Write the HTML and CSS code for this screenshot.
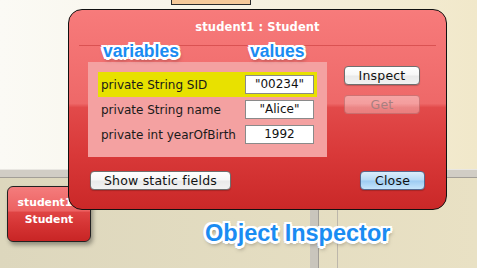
FILE: index.html
```html
<!DOCTYPE html>
<html>
<head>
<meta charset="utf-8">
<title>Object Inspector</title>
<link rel="stylesheet" href="styles.css">
</head>
<body>
<div class="screen">
  <div class="desk-top"></div>
  <div class="desk-band"></div>
  <div class="desk-bottom"></div>

  <div class="class-box"></div>

  <div class="obj">
    <span class="obj-line">student1 :</span>
    <span class="obj-line">Student</span>
  </div>

  <div class="dialog">
    <div class="title">student1 : Student</div>
    <div class="body">
      <div class="fields">
        <div class="row selected">
          <span class="name">private String SID</span>
          <span class="value">"00234"</span>
        </div>
        <div class="row">
          <span class="name">private String name</span>
          <span class="value">"Alice"</span>
        </div>
        <div class="row">
          <span class="name">private int yearOfBirth</span>
          <span class="value">1992</span>
        </div>
      </div>
      <div class="side-buttons">
        <button class="btn">Inspect</button>
        <button class="btn disabled">Get</button>
      </div>
    </div>
    <div class="footer">
      <button class="btn static-btn">Show static fields</button>
      <button class="btn aqua close-btn">Close</button>
    </div>
    <span class="note note-vars">variables</span>
    <span class="note note-vals">values</span>
  </div>

  <span class="note note-big">Object Inspector</span>
</div>
</body>
</html>
```

FILE: styles.css
```css
body {
  margin: 0;
}

.screen {
  position: relative;
  width: 477px;
  height: 268px;
  overflow: hidden;
  display: flex;
  flex-direction: column;
  font-family: "DejaVu Sans", "Noto Sans", sans-serif;
}

.desk-top {
  height: 169px;
  background: linear-gradient(to right, #fbfaf5 0%, #f8f5ea 35%, #f1e8ca 100%);
}

.desk-band {
  height: 9px;
  box-sizing: border-box;
  background: #d1cdc5;
  border-top: 1px solid #e9e7e2;
  border-bottom: 1px solid #a29e97;
}

.desk-bottom {
  flex: 1;
  background:
    linear-gradient(to right,
      transparent 310px, #c9c5bc 310px, #c9c5bc 318px,
      #a09c95 318px, #a09c95 319px, transparent 319px,
      transparent 337px, #bdb7ab 337px, #bdb7ab 338px, transparent 338px),
    linear-gradient(to right, #ddd7bd, #e9e1c4);
}

.class-box {
  position: absolute;
  left: 171px;
  top: -10px;
  width: 80px;
  height: 15px;
  box-sizing: border-box;
  border: 1px solid #2a2a2a;
  background: #f6c999;
}

.obj {
  position: absolute;
  left: 7px;
  top: 186px;
  width: 84px;
  height: 56px;
  box-sizing: border-box;
  padding-top: 7px;
  border: 1px solid #222;
  border-radius: 6px;
  display: flex;
  flex-direction: column;
  align-items: center;
  background: linear-gradient(to bottom, #f47c7c 0%, #ec6262 44%, #df4343 47%, #d53434 70%, #c82525 100%);
  box-shadow: 2px 3px 4px rgba(0, 0, 0, 0.35);
  color: #fff;
  font-weight: bold;
  font-size: 10.8px;
  line-height: 17px;
  white-space: nowrap;
}

.dialog {
  position: absolute;
  left: 68px;
  top: 9px;
  width: 379px;
  height: 201px;
  box-sizing: border-box;
  border: 1px solid #111;
  border-radius: 14px;
  background: linear-gradient(to bottom, #f77b7b 0%, #ee6868 47%, #e24a4a 49%, #d93939 72%, #ca2828 100%);
}

.title {
  margin: 0 10px;
  height: 35px;
  line-height: 35px;
  border-bottom: 1px solid rgba(170, 20, 20, 0.35);
  text-align: center;
  color: #fff;
  font-weight: bold;
  font-size: 11.5px;
  letter-spacing: 0.1px;
}

.body {
  display: flex;
  align-items: flex-start;
  gap: 17px;
  margin-top: 16px;
  padding-left: 19px;
}

.fields {
  width: 239px;
  box-sizing: border-box;
  padding: 10px;
  background: #f4a1a1;
}

.row {
  height: 25px;
  display: flex;
  align-items: center;
  justify-content: space-between;
  padding: 0 3px;
  font-size: 12px;
  color: #1a1a1a;
}

.row.selected {
  background: #e8e100;
}

.name {
  white-space: nowrap;
}

.value {
  width: 69px;
  height: 19px;
  box-sizing: border-box;
  border: 1px solid #8a8a8a;
  background: #fff;
  text-align: center;
  line-height: 17px;
  color: #111;
}

.side-buttons {
  display: flex;
  flex-direction: column;
  gap: 10px;
  margin-top: 4px;
}

.btn {
  height: 19px;
  width: 76px;
  box-sizing: border-box;
  padding: 0;
  border: 1px solid #6f6f6f;
  border-radius: 4px;
  background: linear-gradient(to bottom, #ffffff 0%, #f7f7f7 48%, #e9e9e9 52%, #f2f2f2 100%);
  box-shadow: 0 1px 1px rgba(0, 0, 0, 0.2);
  font-family: "DejaVu Sans", "Noto Sans", sans-serif;
  font-size: 12.5px;
  line-height: 17px;
  color: #111;
  letter-spacing: 0.2px;
}

.btn.disabled {
  background: linear-gradient(to bottom, rgba(255, 255, 255, 0.4), rgba(255, 255, 255, 0.3));
  border-color: rgba(150, 60, 60, 0.4);
  box-shadow: none;
  color: #a88080;
}

.footer {
  display: flex;
  justify-content: space-between;
  margin-top: 14px;
  padding: 0 21px;
}

.static-btn {
  width: 141px;
}

.close-btn {
  width: 65px;
}

.btn.aqua {
  border-color: #56698f;
  background: linear-gradient(to bottom, #dcedfb 0%, #b7daf6 48%, #9ccbf2 52%, #c6e5fb 100%);
}

.note {
  position: absolute;
  font-family: "Liberation Sans", Arial, sans-serif;
  font-weight: bold;
  line-height: 1;
  color: #1a8cf2;
  white-space: nowrap;
  text-shadow:
    -2px -2px 0 #fff, 2px -2px 0 #fff,
    -2px 2px 0 #fff, 2px 2px 0 #fff,
    0 -2.5px 0 #fff, 0 2.5px 0 #fff, -2.5px 0 0 #fff, 2.5px 0 0 #fff,
    1px 3px 4px rgba(0, 0, 0, 0.5);
}

.note-vars {
  left: 34px;
  top: 33px;
  font-size: 17.5px;
}

.note-vals {
  left: 181px;
  top: 33px;
  font-size: 17.5px;
}

.note-big {
  left: 205px;
  top: 222px;
  font-size: 23.5px;
}
```
